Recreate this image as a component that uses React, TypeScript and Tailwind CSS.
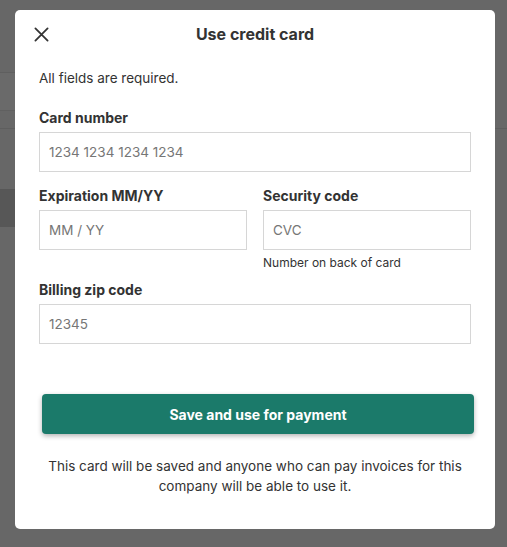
import React from 'react';

const Field: React.FC<{ label: string; placeholder: string; hint?: string }> = ({ label, placeholder, hint }) => (
  <div className="flex flex-col">
    <label className="text-[14px] leading-5 font-bold text-[#333333] mb-1">{label}</label>
    <input
      placeholder={placeholder}
      className="h-10 w-full border border-[#d6d6d6] bg-white px-[9px] text-[13.5px] text-[#333] placeholder:text-[#767676] outline-none"
    />
    {hint && <p className="text-[12px] leading-4 text-[#333] mt-[5px]">{hint}</p>}
  </div>
);

export default function App() {
  return (
    <div className="relative h-[547px] w-[507px] overflow-hidden bg-[#676767] font-['Inter',sans-serif]">
      {/* faint page behind the overlay */}
      <div className="flex flex-col">
        <div className="h-[72px]" />
        <div className="h-[38px] w-[20px] border-t border-[#5f5f5f] bg-[#6a6a6a]" />
        <div className="h-[18px] w-[20px] border-t border-[#606060]" />
        <div className="h-[61px] border-t border-[#5e5e5e]" />
        <div className="h-[38px] w-[20px] bg-[#575757]" />
      </div>

      <div className="absolute left-[15px] top-[10px] w-[480px] rounded-[5px] bg-white px-6 pt-[14px] pb-[33px]">
        {/* Header */}
        <div className="relative flex h-5 items-center justify-center">
          <button className="absolute left-[-11px] top-[-3px] flex h-[26px] w-[26px] items-center justify-center text-[#333]">
            <svg width="15" height="15" viewBox="0 0 16 16" fill="none" stroke="currentColor" strokeWidth="1.9" strokeLinecap="round">
              <path d="M1.5 1.5l13 13M14.5 1.5l-13 13" />
            </svg>
          </button>
          <h2 className="text-[16px] leading-5 font-bold text-[#333]">Use credit card</h2>
        </div>

        <p className="mt-6 text-[13.5px] leading-5 text-[#333]">All fields are required.</p>

        <div className="mt-5">
          <Field label="Card number" placeholder="1234 1234 1234 1234" />
        </div>

        <div className="mt-[14px] grid grid-cols-2 gap-4">
          <Field label="Expiration MM/YY" placeholder="MM / YY" />
          <Field label="Security code" placeholder="CVC" hint="Number on back of card" />
        </div>

        <div className="mt-[9px]">
          <Field label="Billing zip code" placeholder="12345" />
        </div>

        <button className="mt-[50px] ml-[3px] flex h-10 w-full items-center justify-center rounded-[4px] bg-[#1b7a6a] text-[14px] font-bold text-white shadow-[0_2px_5px_rgba(0,0,0,0.3)]">
          Save and use for payment
        </button>

        <p className="mt-[22px] text-center text-[13.5px] leading-5 text-[#333]">
          This card will be saved and anyone who can pay invoices for this company will be able to use it.
        </p>
      </div>
    </div>
  );
}
